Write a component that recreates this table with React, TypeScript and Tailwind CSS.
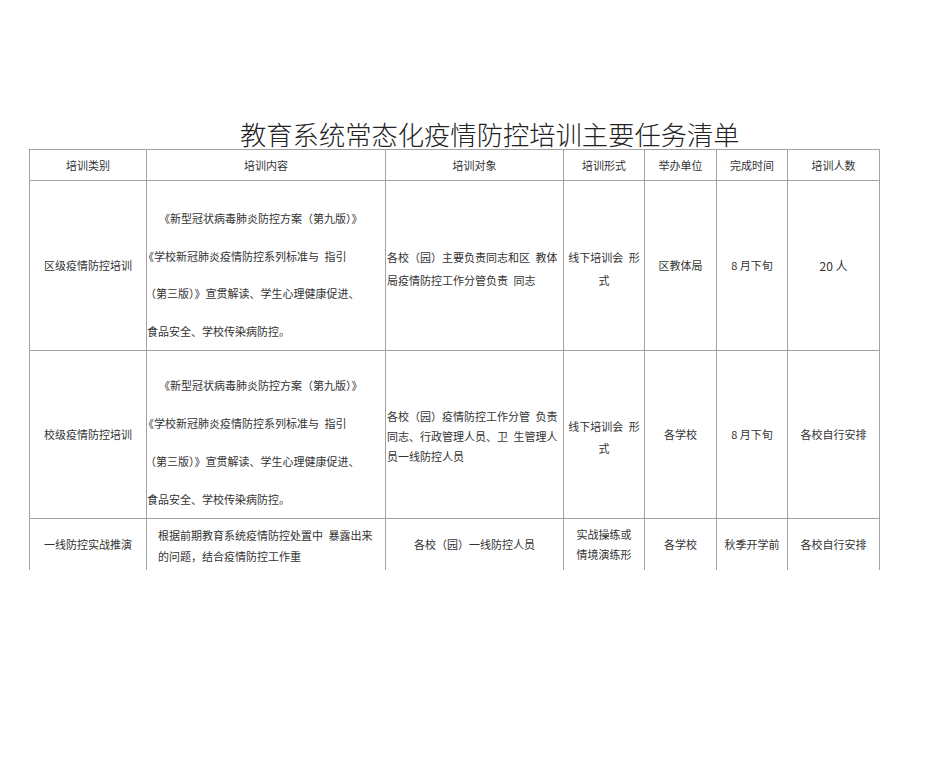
export default function App() {
  const cell = "border border-[#a3a3a3] p-0 text-center align-middle";
  const sp = "\u2002";
  return (
    <div className="w-[950px] h-[758px] bg-white text-[#333] font-['Noto_Sans_CJK_SC','Noto_Sans',sans-serif] text-[11px] overflow-hidden">
      {/* Title */}
      <div className="pt-[118px] pl-[240px] text-[26.3px] leading-[31px] font-light text-[#222] whitespace-nowrap">
        教育系统常态化疫情防控培训主要任务清单
      </div>

      <table className="ml-[29px] border-collapse table-fixed w-[850px]">
        <colgroup>
          <col className="w-[117px]" />
          <col className="w-[239px]" />
          <col className="w-[178px]" />
          <col className="w-[81px]" />
          <col className="w-[72px]" />
          <col className="w-[71px]" />
          <col className="w-[92px]" />
        </colgroup>
        <tbody>
          {/* Header */}
          <tr className="h-[31px]">
            <td className={cell}>培训类别</td>
            <td className={cell}>培训内容</td>
            <td className={cell}>培训对象</td>
            <td className={cell}>培训形式</td>
            <td className={cell}>举办单位</td>
            <td className={cell}>完成时间</td>
            <td className={cell}>培训人数</td>
          </tr>

          {/* 区级 */}
          <tr className="h-[167px]">
            <td className={cell}>区级疫情防控培训</td>
            <td className={`${cell} text-left align-top`}>
              <div className="pt-[19px] leading-[37.5px] whitespace-nowrap">
                <div className="pl-[12px]">《新型冠状病毒肺炎防控方案（第九版）》</div>
                <div className="-ml-[4px]">《学校新冠肺炎疫情防控系列标准与{sp}指引</div>
                <div className="-ml-[2px]">（第三版）》宣贯解读、学生心理健康促进、</div>
                <div>食品安全、学校传染病防控。</div>
              </div>
            </td>
            <td className={`${cell} text-left`}>
              <div className="pt-[6px] pl-[1px] leading-[23px] whitespace-nowrap">
                <div>各校（园）主要负责同志和区{sp}教体</div>
                <div>局疫情防控工作分管负责{sp}同志</div>
              </div>
            </td>
            <td className={cell}>
              <div className="pt-[6px] leading-[23px]">
                <div>线下培训会{sp}形</div>
                <div>式</div>
              </div>
            </td>
            <td className={cell}>区教体局</td>
            <td className={cell}>8 月下旬</td>
            <td className={`${cell} text-[12px]`}>20 人</td>
          </tr>

          {/* 校级 */}
          <tr className="h-[168px]">
            <td className={cell}>校级疫情防控培训</td>
            <td className={`${cell} text-left align-top`}>
              <div className="pt-[15px] leading-[38px] whitespace-nowrap">
                <div className="pl-[12px]">《新型冠状病毒肺炎防控方案（第九版）》</div>
                <div className="-ml-[4px]">《学校新冠肺炎疫情防控系列标准与{sp}指引</div>
                <div className="-ml-[2px]">（第三版）》宣贯解读、学生心理健康促进、</div>
                <div>食品安全、学校传染病防控。</div>
              </div>
            </td>
            <td className={`${cell} text-left`}>
              <div className="pt-[2px] pl-[1px] leading-[20px] whitespace-nowrap">
                <div>各校（园）疫情防控工作分管{sp}负责</div>
                <div>同志、行政管理人员、卫{sp}生管理人</div>
                <div>员一线防控人员</div>
              </div>
            </td>
            <td className={cell}>
              <div className="pt-[4px] leading-[22px]">
                <div>线下培训会{sp}形</div>
                <div>式</div>
              </div>
            </td>
            <td className={cell}>各学校</td>
            <td className={cell}>8 月下旬</td>
            <td className={cell}>各校自行安排</td>
          </tr>

          {/* 一线 */}
          <tr className="h-[51px]">
            <td className={`${cell} border-b-0`}>一线防控实战推演</td>
            <td className={`${cell} border-b-0 text-left`}>
              <div className="pt-[4px] pl-[11px] leading-[21px] whitespace-nowrap">
                <div>根据前期教育系统疫情防控处置中{sp}暴露出来</div>
                <div>的问题，结合疫情防控工作重</div>
              </div>
            </td>
            <td className={`${cell} border-b-0`}>各校（园）一线防控人员</td>
            <td className={`${cell} border-b-0`}>
              <div className="leading-[20px]">
                <div>实战操练或</div>
                <div>情境演练形</div>
              </div>
            </td>
            <td className={`${cell} border-b-0`}>各学校</td>
            <td className={`${cell} border-b-0`}>秋季开学前</td>
            <td className={`${cell} border-b-0`}>各校自行安排</td>
          </tr>
        </tbody>
      </table>
    </div>
  );
}
